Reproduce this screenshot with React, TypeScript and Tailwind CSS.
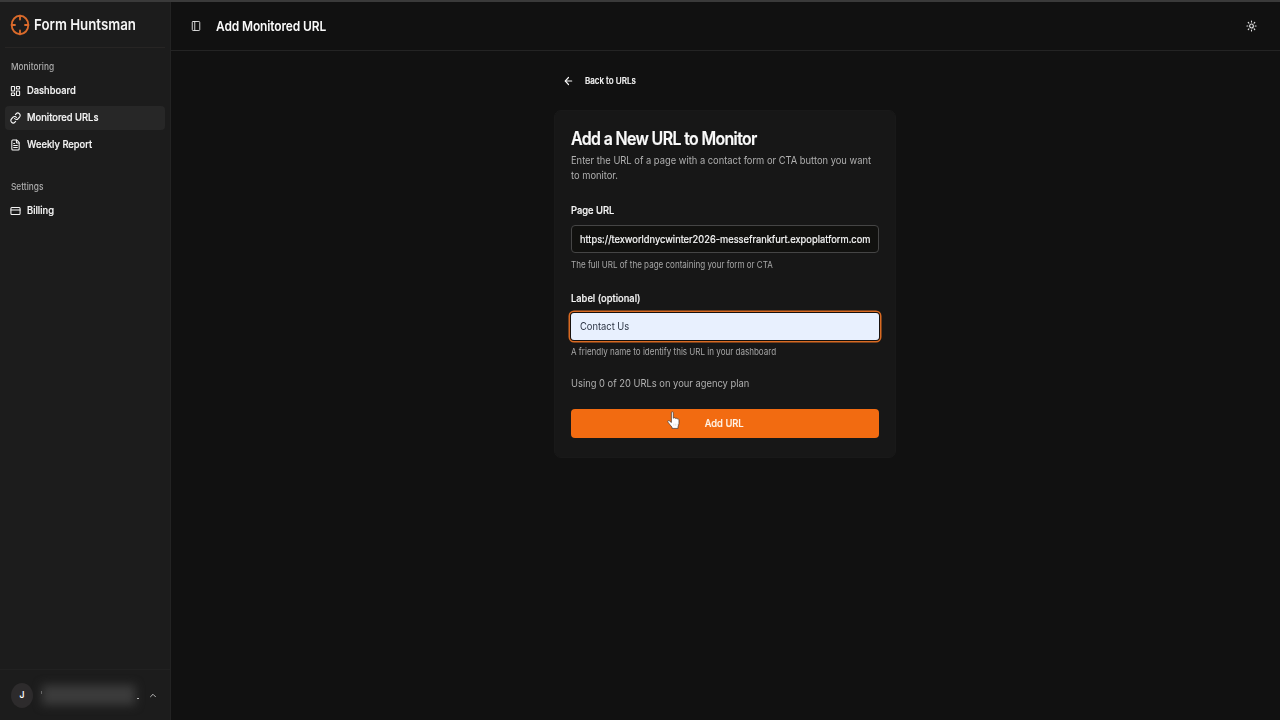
import type { ReactNode } from "react"
import {
  ArrowLeft,
  ChevronUp,
  CreditCard,
  FileText,
  LayoutDashboard,
  Link,
  PanelLeft,
  Sun,
  type LucideIcon,
} from "lucide-react"
import clsx from "clsx"

const navGroups: { title: string; items: { label: string; icon: LucideIcon; active?: boolean }[] }[] = [
  {
    title: "Monitoring",
    items: [
      { label: "Dashboard", icon: LayoutDashboard },
      { label: "Monitored URLs", icon: Link, active: true },
      { label: "Weekly Report", icon: FileText },
    ],
  },
  {
    title: "Settings",
    items: [{ label: "Billing", icon: CreditCard }],
  },
]

// Slightly condensed Inter
function Condensed({
  children,
  className,
  origin = "origin-left",
}: {
  children: ReactNode
  className?: string
  origin?: string
}) {
  return (
    <span className={clsx("inline-block scale-x-[0.875] whitespace-nowrap", origin, className)}>{children}</span>
  )
}

function Logo() {
  return (
    <svg
      viewBox="0 0 24 24"
      preserveAspectRatio="none"
      className="h-[22px] w-[20px] shrink-0"
      fill="none"
      stroke="#d96a2b"
      strokeWidth="2.2"
      strokeLinecap="round"
    >
      <circle cx="12" cy="12" r="10" />
      <path d="M22 12h-4M6 12H2M12 6V2M12 22v-4" />
    </svg>
  )
}

function HandCursor() {
  return (
    <svg viewBox="0 0 12 18" className="absolute left-[96px] top-[2px] h-[19px] w-[13px]">
      <path
        d="M4 1.6c0-1.2 1.8-1.2 1.8 0v5.2l.3-.1c.3-.6 1.5-.5 1.7.3.5-.5 1.6-.2 1.7.6.7-.4 1.7 0 1.7.9v3.2c0 1.4-.7 2.2-.9 3.3v1.5H4.6v-1.2C3.4 14 2.3 12.5.8 10.6c-.8-1.1.5-2 1.4-1.2L4 10.9z"
        fill="#fff"
        stroke="#4a3a33"
        strokeWidth="0.7"
        strokeLinejoin="round"
      />
      <path d="M6.300 12v2M8 12v2M9.600 12v2" stroke="#d9cfc8" strokeWidth="0.5" />
    </svg>
  )
}

function Sidebar() {
  return (
    <aside className="flex w-[171px] shrink-0 flex-col border-r border-[#232323] bg-[#1c1c1c]">
      <div className="mx-[5px] flex h-[46px] items-center border-b border-[#272524] pl-[5px]">
        <Logo />
        <Condensed className="ml-1 pt-px text-[15.2px] font-semibold leading-5 text-[#f5f5f5]">Form Huntsman</Condensed>
      </div>

      <nav className="flex flex-1 flex-col gap-[18px] px-[5px] pt-[7px]">
        {navGroups.map((group) => (
          <div key={group.title}>
            <div className="flex h-6 items-center pl-[6px] text-[9.5px] font-medium text-[#acacac]">
              <Condensed>{group.title}</Condensed>
            </div>
            <ul className="flex flex-col gap-[3px]">
              {group.items.map(({ label, icon: Icon, active }) => (
                <li
                  key={label}
                  className={clsx(
                    "flex h-6 w-[160px] items-center rounded-[4px] pl-[5px] text-[#f5f5f5]",
                    active && "bg-[#272727]"
                  )}
                >
                  <Icon preserveAspectRatio="none" strokeWidth={2.3} className="h-3 w-[11px] shrink-0" />
                  <Condensed className="ml-[6px] pt-px text-[10.7px] font-medium [-webkit-text-stroke:0.2px]">
                    {label}
                  </Condensed>
                </li>
              ))}
            </ul>
          </div>
        ))}
      </nav>

      <div className="flex h-[51px] items-center border-t border-[#212121] pl-[11px]">
        <div className="flex h-[25px] w-[22px] items-center justify-center rounded-[50%] bg-[#2d2b2c] text-[8.5px] font-semibold text-white">
          J
        </div>
        <div className="ml-[8px] flex w-[98px] items-center">
          <span className="h-[3px] w-px -translate-y-[3px] bg-[#8a8a8a]" />
          <div className="h-[20px] w-[93px] bg-[#3c3c3c] blur-[5px]" />
          <span className="ml-[2px] mt-[6px] h-px w-[2px] bg-[#e0e0e0]" />
        </div>
        <ChevronUp className="ml-[9px] h-[11px] w-[10px] text-[#d4d4d4]" />
      </div>
    </aside>
  )
}

function AddUrlCard() {
  return (
    <section className="flex h-[348px] w-[342px] flex-col rounded-[7px] border border-[#191919] bg-[#171717] px-4 pt-[17px]">
      <h2 className="h-5 text-[18.2px] font-semibold leading-5 tracking-[-0.04em] text-[#fafafa]">
        <Condensed className="[-webkit-text-stroke:0.2px]">Add a New URL to Monitor</Condensed>
      </h2>
      <p className="mt-[5px] flex flex-col text-[10.7px] leading-[15px] text-[#b0b0b0]">
        <Condensed>Enter the URL of a page with a contact form or CTA button you want</Condensed>
        <Condensed>to monitor.</Condensed>
      </p>

      <label className="mt-[21px] h-[14px] text-[10.7px] font-medium leading-[14px] text-[#f5f5f5]">
        <Condensed className="[-webkit-text-stroke:0.2px]">Page URL</Condensed>
      </label>
      <div className="mt-[7px] flex h-7 items-center rounded-[4px] border border-[#454545] bg-[#11110f] px-2 text-[10.7px] text-[#fafafa]">
        <Condensed className="pt-[2px] [-webkit-text-stroke:0.2px]">
          https://texworldnycwinter2026-messefrankfurt.expoplatform.com
        </Condensed>
      </div>
      <p className="mt-[5px] h-[14px] text-[9.2px] leading-[14px] text-[#a8a8a8]">
        <Condensed>The full URL of the page containing your form or CTA</Condensed>
      </p>

      <label className="mt-5 h-[14px] text-[10.7px] font-medium leading-[14px] text-[#f5f5f5]">
        <Condensed className="[-webkit-text-stroke:0.2px]">Label (optional)</Condensed>
      </label>
      <div className="mt-[7px] flex h-[27px] items-center rounded-[3px] bg-[#e8f0fe] px-[9px] text-[10.7px] text-[#2c3444] shadow-[0_0_0_1px_#17110e,0_0_0_2.5px_#d96a22]">
        <Condensed className="pt-[2px]">Contact Us</Condensed>
      </div>
      <p className="mt-[5px] h-[14px] text-[9.2px] leading-[14px] text-[#a8a8a8]">
        <Condensed>A friendly name to identify this URL in your dashboard</Condensed>
      </p>

      <p className="mt-[17px] h-4 text-[10.7px] leading-4 text-[#b0b0b0]">
        <Condensed>Using 0 of 20 URLs on your agency plan</Condensed>
      </p>

      <button className="relative mt-[17px] flex h-[29px] items-center justify-center rounded-[4px] bg-[#f26b11] text-[10.7px] font-medium text-[#fff3e8]">
        <Condensed origin="origin-center" className="pt-px [-webkit-text-stroke:0.2px]">
          Add URL
        </Condensed>
        <HandCursor />
      </button>
    </section>
  )
}

export default function App() {
  return (
    <div className="flex h-[720px] w-[1280px] flex-col overflow-hidden border-t-2 border-[#3a3a3a] bg-[#111111] font-['Inter',sans-serif]">
      <div className="flex min-h-0 flex-1">
        <Sidebar />
        <div className="flex flex-1 flex-col">
          <header className="flex h-[49px] items-center border-b border-[#242424] pl-[20px] pr-[23px]">
            <PanelLeft preserveAspectRatio="none" className="h-3 w-[10px] text-[#e5e5e5]" />
            <h1 className="ml-[15px] flex-1 text-[13.7px] font-semibold tracking-[-0.01em] text-[#fafafa]">
              <Condensed>Add Monitored URL</Condensed>
            </h1>
            <Sun preserveAspectRatio="none" strokeWidth={2.4} className="h-3 w-[11px] text-[#e5e5e5]" />
          </header>

          <main className="flex flex-1 flex-col items-center pt-[24px]">
            <div className="w-[342px] -translate-x-px">
              <div className="flex h-3 items-center pl-[9px] text-[#fafafa]">
                <ArrowLeft preserveAspectRatio="none" strokeWidth={2.4} className="h-3 w-[11px]" />
                <Condensed className="ml-[11px] text-[9.2px] font-medium [-webkit-text-stroke:0.2px]">
                  Back to URLs
                </Condensed>
              </div>
              <div className="mt-[23px]">
                <AddUrlCard />
              </div>
            </div>
          </main>
        </div>
      </div>
    </div>
  )
}
